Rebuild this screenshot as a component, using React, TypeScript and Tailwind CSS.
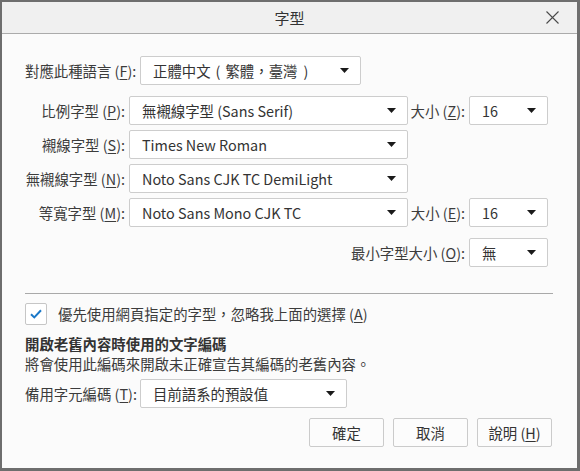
import React from "react";

const FONT = {
  fontFamily: '"Noto Sans CJK TC", "Noto Sans", sans-serif',
};

function Acc({ k }: { k: string }) {
  return (
    <span>
      {" ("}
      <span className="underline underline-offset-2">{k}</span>
      {"):"}
    </span>
  );
}

function Arrow() {
  return (
    <svg width="9" height="5" viewBox="0 0 9 5" className="shrink-0">
      <path d="M0 0 L9 0 L4.5 5 Z" fill="#1a1a1a" />
    </svg>
  );
}

function Select({ value, w }: { value: React.ReactNode; w: string }) {
  return (
    <div
      className={`${w} h-[29px] shrink-0 flex items-center justify-between pl-[12px] pr-[11px] bg-white border border-[#cdcdcd] rounded-[2px] text-[#333]`}
    >
      <span className="whitespace-nowrap">{value}</span>
      <Arrow />
    </div>
  );
}

function Label({
  text,
  k,
  w,
}: {
  text: string;
  k: string;
  w: string;
}) {
  return (
    <div className={`${w} shrink-0 text-right whitespace-nowrap pr-[4px] text-[#3c3c3c]`}>
      {text}
      <Acc k={k} />
    </div>
  );
}

function Button({ children }: { children: React.ReactNode }) {
  return (
    <div className="w-[75px] h-[29px] flex items-center justify-center bg-[#fcfcfc] border border-[#cbcbcb] rounded-[2px] text-[#333]">
      {children}
    </div>
  );
}

export default function App() {
  return (
    <div
      className="w-[580px] h-[471px] flex flex-col bg-[#fbfbfb] border-t-2 border-l-2 border-r-[3px] border-b-[3px] border-[#6e6e6e] text-[14.4px] leading-[20px]"
      style={FONT}
    >
      {/* title bar */}
      <div className="h-[32px] shrink-0 relative flex items-center justify-center bg-[#f0f0f0] border-b border-[#ababab] text-[#333] text-[15px]">
        <span>字型</span>
        <svg
          width="13"
          height="13"
          viewBox="0 0 13 13"
          className="absolute right-[18px] top-[9px]"
        >
          <path d="M0.5 0.5 L12.5 12.5 M12.5 0.5 L0.5 12.5" stroke="#4a4a4a" strokeWidth="1.1" />
        </svg>
      </div>

      {/* body */}
      <div className="flex flex-col pl-[23px] pr-[24px] pt-[22px]">
        <div className="flex items-center">
          <Label text="對應此種語言" k="F" w="w-[115px]" />
          <Select
            value={
              <>
                正體中文<span className="mx-[5px]">(</span>繁體，臺灣
                <span className="ml-[6px]">)</span>
              </>
            }
            w="w-[221px]"
          />
        </div>

        <div className="flex flex-col gap-[5px] mt-[11px]">
          <div className="flex items-center">
            <Label text="比例字型" k="P" w="w-[104px]" />
            <Select value="無襯線字型 (Sans Serif)" w="w-[279px]" />
            <Label text="大小" k="Z" w="w-[61px]" />
            <Select value="16" w="w-[79px]" />
          </div>
          <div className="flex items-center">
            <Label text="襯線字型" k="S" w="w-[104px]" />
            <Select value="Times New Roman" w="w-[279px]" />
          </div>
          <div className="flex items-center">
            <Label text="無襯線字型" k="N" w="w-[104px]" />
            <Select value="Noto Sans CJK TC DemiLight" w="w-[279px]" />
          </div>
          <div className="flex items-center">
            <Label text="等寬字型" k="M" w="w-[104px]" />
            <Select value="Noto Sans Mono CJK TC" w="w-[279px]" />
            <Label text="大小" k="E" w="w-[61px]" />
            <Select value="16" w="w-[79px]" />
          </div>
        </div>

        <div className="flex items-center justify-end mt-[11px] pr-[5px]">
          <Label text="最小字型大小" k="O" w="w-[160px]" />
          <Select value="無" w="w-[79px]" />
        </div>

        <div className="h-px bg-[#a9a9a9] mt-[26px]" />

        <div className="flex items-center mt-[9px] h-[22px]">
          <div className="w-[22px] h-[22px] shrink-0 flex items-center justify-center bg-white border border-[#c6c6c6] rounded-[2px]">
            <svg width="12" height="10" viewBox="0 0 12 10">
              <path
                d="M1 5.2 L4.3 8.4 L11 1.2"
                fill="none"
                stroke="#1a78c8"
                strokeWidth="2"
              />
            </svg>
          </div>
          <span className="ml-[11px] text-[#3c3c3c] whitespace-nowrap">
            優先使用網頁指定的字型，忽略我上面的選擇 (
            <span className="underline underline-offset-2">A</span>)
          </span>
        </div>

        <div className="mt-[9px] font-bold text-[#333]">開啟老舊內容時使用的文字編碼</div>
        <div className="text-[#3c3c3c]">將會使用此編碼來開啟未正確宣告其編碼的老舊內容。</div>

        <div className="flex items-center mt-[5px]">
          <div className="w-[115px] shrink-0 whitespace-nowrap text-[#3c3c3c]">
            備用字元編碼
            <Acc k="T" />
          </div>
          <Select value="目前語系的預設值" w="w-[207px]" />
        </div>

        <div className="flex justify-end gap-[9px] mt-[10px] pr-[1px]">
          <Button>確定</Button>
          <Button>取消</Button>
          <Button>
            說明 (<span className="underline underline-offset-2">H</span>)
          </Button>
        </div>
      </div>
    </div>
  );
}
